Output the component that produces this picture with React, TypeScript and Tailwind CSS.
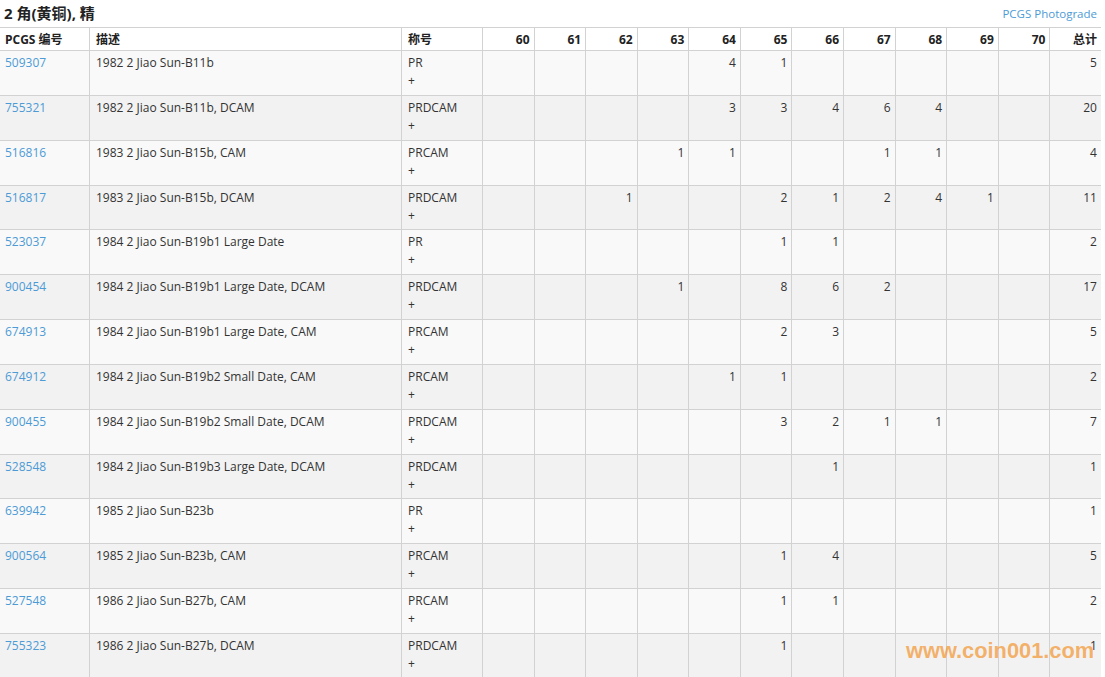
import React from 'react';

type Row = {
  id: string;
  desc: string;
  des: string;
  grades: Record<number, number>;
  total: number;
};

const rows: Row[] = [
  { id: '509307', desc: '1982 2 Jiao Sun-B11b', des: 'PR', grades: { 64: 4, 65: 1 }, total: 5 },
  { id: '755321', desc: '1982 2 Jiao Sun-B11b, DCAM', des: 'PRDCAM', grades: { 64: 3, 65: 3, 66: 4, 67: 6, 68: 4 }, total: 20 },
  { id: '516816', desc: '1983 2 Jiao Sun-B15b, CAM', des: 'PRCAM', grades: { 63: 1, 64: 1, 67: 1, 68: 1 }, total: 4 },
  { id: '516817', desc: '1983 2 Jiao Sun-B15b, DCAM', des: 'PRDCAM', grades: { 62: 1, 65: 2, 66: 1, 67: 2, 68: 4, 69: 1 }, total: 11 },
  { id: '523037', desc: '1984 2 Jiao Sun-B19b1 Large Date', des: 'PR', grades: { 65: 1, 66: 1 }, total: 2 },
  { id: '900454', desc: '1984 2 Jiao Sun-B19b1 Large Date, DCAM', des: 'PRDCAM', grades: { 63: 1, 65: 8, 66: 6, 67: 2 }, total: 17 },
  { id: '674913', desc: '1984 2 Jiao Sun-B19b1 Large Date, CAM', des: 'PRCAM', grades: { 65: 2, 66: 3 }, total: 5 },
  { id: '674912', desc: '1984 2 Jiao Sun-B19b2 Small Date, CAM', des: 'PRCAM', grades: { 64: 1, 65: 1 }, total: 2 },
  { id: '900455', desc: '1984 2 Jiao Sun-B19b2 Small Date, DCAM', des: 'PRDCAM', grades: { 65: 3, 66: 2, 67: 1, 68: 1 }, total: 7 },
  { id: '528548', desc: '1984 2 Jiao Sun-B19b3 Large Date, DCAM', des: 'PRDCAM', grades: { 66: 1 }, total: 1 },
  { id: '639942', desc: '1985 2 Jiao Sun-B23b', des: 'PR', grades: {}, total: 1 },
  { id: '900564', desc: '1985 2 Jiao Sun-B23b, CAM', des: 'PRCAM', grades: { 65: 1, 66: 4 }, total: 5 },
  { id: '527548', desc: '1986 2 Jiao Sun-B27b, CAM', des: 'PRCAM', grades: { 65: 1, 66: 1 }, total: 2 },
  { id: '755323', desc: '1986 2 Jiao Sun-B27b, DCAM', des: 'PRDCAM', grades: { 65: 1 }, total: 1 },
];

const grades = [60, 61, 62, 63, 64, 65, 66, 67, 68, 69, 70];

const gridCols = 'grid grid-cols-[89px_312px_81px_repeat(12,minmax(0,1fr))]';

export default function App() {
  return (
    <div className="relative w-[1105px] h-[677px] overflow-hidden bg-white text-[#333] font-['Open_Sans','Noto_Sans_CJK_SC',sans-serif]">
      {/* Title bar */}
      <div className="flex items-center justify-between h-[27px] pl-[4px] pr-[8px]">
        <h2 className="text-[15px] font-bold text-[#222] leading-none">2 角(黄铜), 精</h2>
        <a className="text-[11.5px] text-[#4d9bd6] leading-none">PCGS Photograde</a>
      </div>

      <div className="w-[1101px] text-[12px]">
        {/* Header */}
        <div className={`${gridCols} h-[24px] border-y border-[#d2d2d2] bg-white font-bold text-[#222]`}>
          <div className="px-[5px] pt-[1px] flex items-center">PCGS 编号</div>
          <div className="px-[6px] pt-[1px] flex items-center border-l border-[#d2d2d2]">描述</div>
          <div className="px-[6px] pt-[1px] flex items-center border-l border-[#d2d2d2]">称号</div>
          {grades.map((g) => (
            <div key={g} className="pr-[4px] pt-[1px] flex items-center justify-end border-l border-[#d2d2d2]">{g}</div>
          ))}
          <div className="pr-[4px] pt-[1px] flex items-center justify-end border-l border-[#d2d2d2]">总计</div>
        </div>

        {/* Body */}
        {rows.map((r, i) => (
          <div
            key={r.id}
            className={`${gridCols} h-[44.85px] border-b border-[#d2d2d2] leading-[18px] ${i % 2 === 0 ? 'bg-[#f9f9f9]' : 'bg-[#f2f2f2]'}`}
          >
            <div className="px-[5px] pt-[3px] text-[#4d9bd6]">{r.id}</div>
            <div className="px-[6px] pt-[3px] border-l border-[#d2d2d2]">{r.desc}</div>
            <div className="px-[6px] pt-[3px] border-l border-[#d2d2d2]">
              <div>{r.des}</div>
              <div>+</div>
            </div>
            {grades.map((g) => (
              <div key={g} className="pr-[4px] pt-[3px] text-right border-l border-[#d2d2d2]">
                {r.grades[g] ?? ''}
              </div>
            ))}
            <div className="pr-[4px] pt-[3px] text-right border-l border-[#d2d2d2]">{r.total}</div>
          </div>
        ))}
      </div>

      {/* Watermark */}
      <div className="absolute left-[906px] top-[635px] text-[21.8px] font-bold text-[#f39a3c]/75 font-['Liberation_Sans',sans-serif]">
        www.coin001.com
      </div>
    </div>
  );
}
